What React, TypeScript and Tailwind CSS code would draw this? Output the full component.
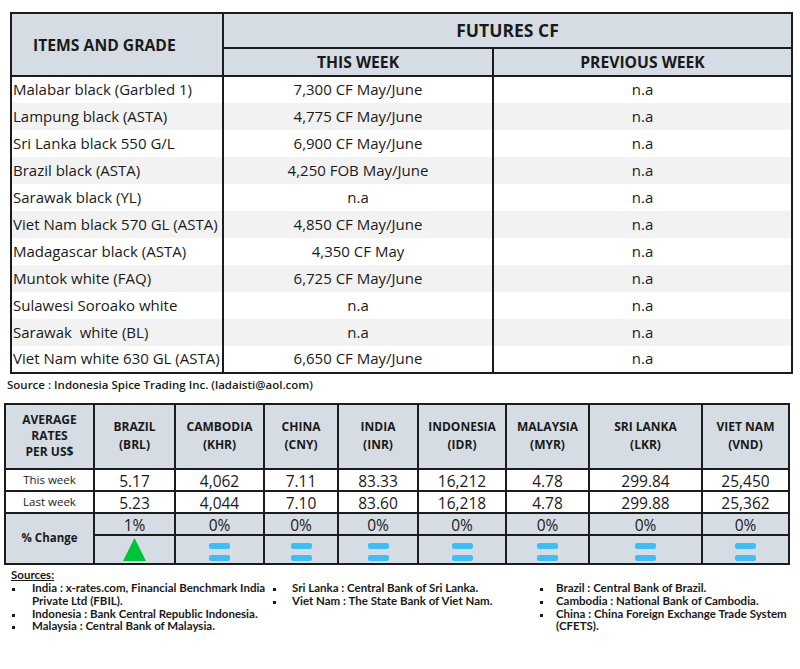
import React from 'react';

const font = { fontFamily: '"Open Sans", "Noto Sans", Arial, sans-serif' };
const narrow = { fontFamily: 'Lato, "Open Sans", Arial, sans-serif' };

const futures: [string, string, string][] = [
  ['Malabar black (Garbled 1)', '7,300 CF May/June', 'n.a'],
  ['Lampung black (ASTA)', '4,775 CF May/June', 'n.a'],
  ['Sri Lanka black 550 G/L', '6,900 CF May/June', 'n.a'],
  ['Brazil black (ASTA)', '4,250 FOB May/June', 'n.a'],
  ['Sarawak black (YL)', 'n.a', 'n.a'],
  ['Viet Nam black 570 GL (ASTA)', '4,850 CF May/June', 'n.a'],
  ['Madagascar black (ASTA)', '4,350 CF May', 'n.a'],
  ['Muntok white (FAQ)', '6,725 CF May/June', 'n.a'],
  ['Sulawesi Soroako white', 'n.a', 'n.a'],
  ['Sarawak  white (BL)', 'n.a', 'n.a'],
  ['Viet Nam white 630 GL (ASTA)', '6,650 CF May/June', 'n.a'],
];

const currencies = [
  { name: 'BRAZIL', code: '(BRL)', now: '5.17', last: '5.23', pct: '1%', up: true, w: 'w-[81px]' },
  { name: 'CAMBODIA', code: '(KHR)', now: '4,062', last: '4,044', pct: '0%', up: false, w: 'w-[89px]' },
  { name: 'CHINA', code: '(CNY)', now: '7.11', last: '7.10', pct: '0%', up: false, w: 'w-[74px]' },
  { name: 'INDIA', code: '(INR)', now: '83.33', last: '83.60', pct: '0%', up: false, w: 'w-[80px]' },
  { name: 'INDONESIA', code: '(IDR)', now: '16,212', last: '16,218', pct: '0%', up: false, w: 'w-[88px]' },
  { name: 'MALAYSIA', code: '(MYR)', now: '4.78', last: '4.78', pct: '0%', up: false, w: 'w-[83px]' },
  { name: 'SRI LANKA', code: '(LKR)', now: '299.84', last: '299.88', pct: '0%', up: false, w: 'w-[113px]' },
  { name: 'VIET NAM', code: '(VND)', now: '25,450', last: '25,362', pct: '0%', up: false, w: 'w-[87px]' },
];

const UpArrow = () => (
  <svg width="23" height="23" viewBox="0 0 23 23" className="mx-auto block">
    <polygon points="11.5,0 23,23 0,23" fill="#00c33c" />
  </svg>
);

const Equal = () => (
  <div className="mx-auto flex w-[21px] flex-col gap-[6px]">
    <div className="h-[6px] rounded-[2px] bg-[#3fbef6]" />
    <div className="h-[6px] rounded-[2px] bg-[#3fbef6]" />
  </div>
);

const Bullet = ({ children, indent = 'w-[20px]' }: { children: React.ReactNode; indent?: string }) => (
  <li className="flex">
    <span className={`${indent} shrink-0 pt-[6px]`}>
      <span className="block h-[3px] w-[3px] bg-[#1a1a1a]" />
    </span>
    <span>{children}</span>
  </li>
);

export default function App() {
  const bd = 'border-2 border-[#1c1c1c]';
  return (
    <div className="w-[800px] h-[669px] bg-white text-[#1a1a1a] overflow-hidden" style={font}>
      {/* futures table */}
      <div className="pt-[12px] pl-[10px]">
        <table className={`table-fixed border-collapse w-[781px] ${bd}`}>
          <colgroup>
            <col className="w-[212px]" />
            <col className="w-[270px]" />
            <col className="w-[299px]" />
          </colgroup>
          <thead className="bg-[#d6dce4]">
            <tr className="h-[35px]">
              <th rowSpan={2} className={`${bd} text-left pl-[21px] text-[15.7px] font-bold pt-[2px]`}>
                ITEMS AND GRADE
              </th>
              <th colSpan={2} className={`${bd} text-[17.5px] font-bold`}>FUTURES CF</th>
            </tr>
            <tr className="h-[27px]">
              <th className={`${bd} text-[15.7px] font-bold pt-[2px]`}>THIS WEEK</th>
              <th className={`${bd} text-[15.7px] font-bold pt-[2px]`}>PREVIOUS WEEK</th>
            </tr>
          </thead>
          <tbody>
            {futures.map(([item, now, prev], i) => (
              <tr key={item} className={`h-[27px] text-[15px] ${i % 2 === 1 ? 'bg-[#f2f2f2]' : 'bg-white'}`}>
                <td className="border-r-2 border-[#1c1c1c] pl-[1px] whitespace-pre">{item}</td>
                <td className="border-r-2 border-[#1c1c1c] text-center">{now}</td>
                <td className="text-center">{prev}</td>
              </tr>
            ))}
          </tbody>
        </table>
      </div>

      <p className="pl-[7px] pt-[2px] text-[11.5px] font-semibold leading-[18px]">
        Source : Indonesia Spice Trading Inc. (ladaisti@aol.com)
      </p>

      {/* exchange rate table */}
      <div className="pt-[9px] pl-[4px]">
        <table className={`table-fixed border-collapse w-[784px] ${bd} text-center`}>
          <colgroup>
            <col className="w-[89px]" />
            {currencies.map((c) => (
              <col key={c.name} className={c.w} />
            ))}
          </colgroup>
          <tbody>
            <tr className="h-[65px] bg-[#d6dce4]">
              <td className={`${bd} text-[12px] font-bold leading-[16px]`}>
                AVERAGE
                <br />
                RATES
                <br />
                PER US$
              </td>
              {currencies.map((c) => (
                <td key={c.name} className={`${bd} text-[12px] font-bold leading-[18px]`}>
                  {c.name}
                  <br />
                  {c.code}
                </td>
              ))}
            </tr>
            <tr className="h-[22px] bg-white">
              <td className={`${bd} text-[11.5px]`}>This week</td>
              {currencies.map((c) => (
                <td key={c.name} className={`${bd} text-[15.5px] leading-[15px] pt-[4px]`}>{c.now}</td>
              ))}
            </tr>
            <tr className="h-[22px] bg-white">
              <td className={`${bd} text-[11.5px]`}>Last week</td>
              {currencies.map((c) => (
                <td key={c.name} className={`${bd} text-[15.5px] leading-[15px] pt-[4px]`}>{c.last}</td>
              ))}
            </tr>
            <tr className="h-[22px] bg-[#d6dce4]">
              <td rowSpan={2} className={`${bd} text-[11.5px] font-bold`}>% Change</td>
              {currencies.map((c) => (
                <td key={c.name} className={`${bd} text-[15.5px] leading-[15px] pt-[3px]`}>{c.pct}</td>
              ))}
            </tr>
            <tr className="h-[29px] bg-[#d6dce4]">
              {currencies.map((c) => (
                <td key={c.name} className={`${bd} align-bottom pb-[2px]`}>{c.up ? <UpArrow /> : <Equal />}</td>
              ))}
            </tr>
          </tbody>
        </table>
      </div>

      {/* sources */}
      <div className="pl-[11px] pt-[4px] text-[11.5px] font-bold leading-[12.7px]" style={narrow}>
        <p className="underline">Sources:</p>
        <div className="flex pt-[1px]">
          <ul className="w-[262px] pr-[6px] pl-[1px]">
            <Bullet>India : x-rates.com, Financial Benchmark India Private Ltd (FBIL).</Bullet>
            <Bullet>Indonesia : Bank Central Republic Indonesia.</Bullet>
            <Bullet>Malaysia : Central Bank of Malaysia.</Bullet>
          </ul>
          <ul className="w-[267px]">
            <Bullet indent="w-[19px]">Sri Lanka : Central Bank of Sri Lanka.</Bullet>
            <Bullet indent="w-[19px]">Viet Nam : The State Bank of Viet Nam.</Bullet>
          </ul>
          <ul className="w-[255px]">
            <Bullet indent="w-[16px]">Brazil :  Central Bank of Brazil.</Bullet>
            <Bullet indent="w-[16px]">Cambodia : National Bank of Cambodia.</Bullet>
            <Bullet indent="w-[16px]">China : China Foreign Exchange Trade System (CFETS).</Bullet>
          </ul>
        </div>
      </div>
    </div>
  );
}
